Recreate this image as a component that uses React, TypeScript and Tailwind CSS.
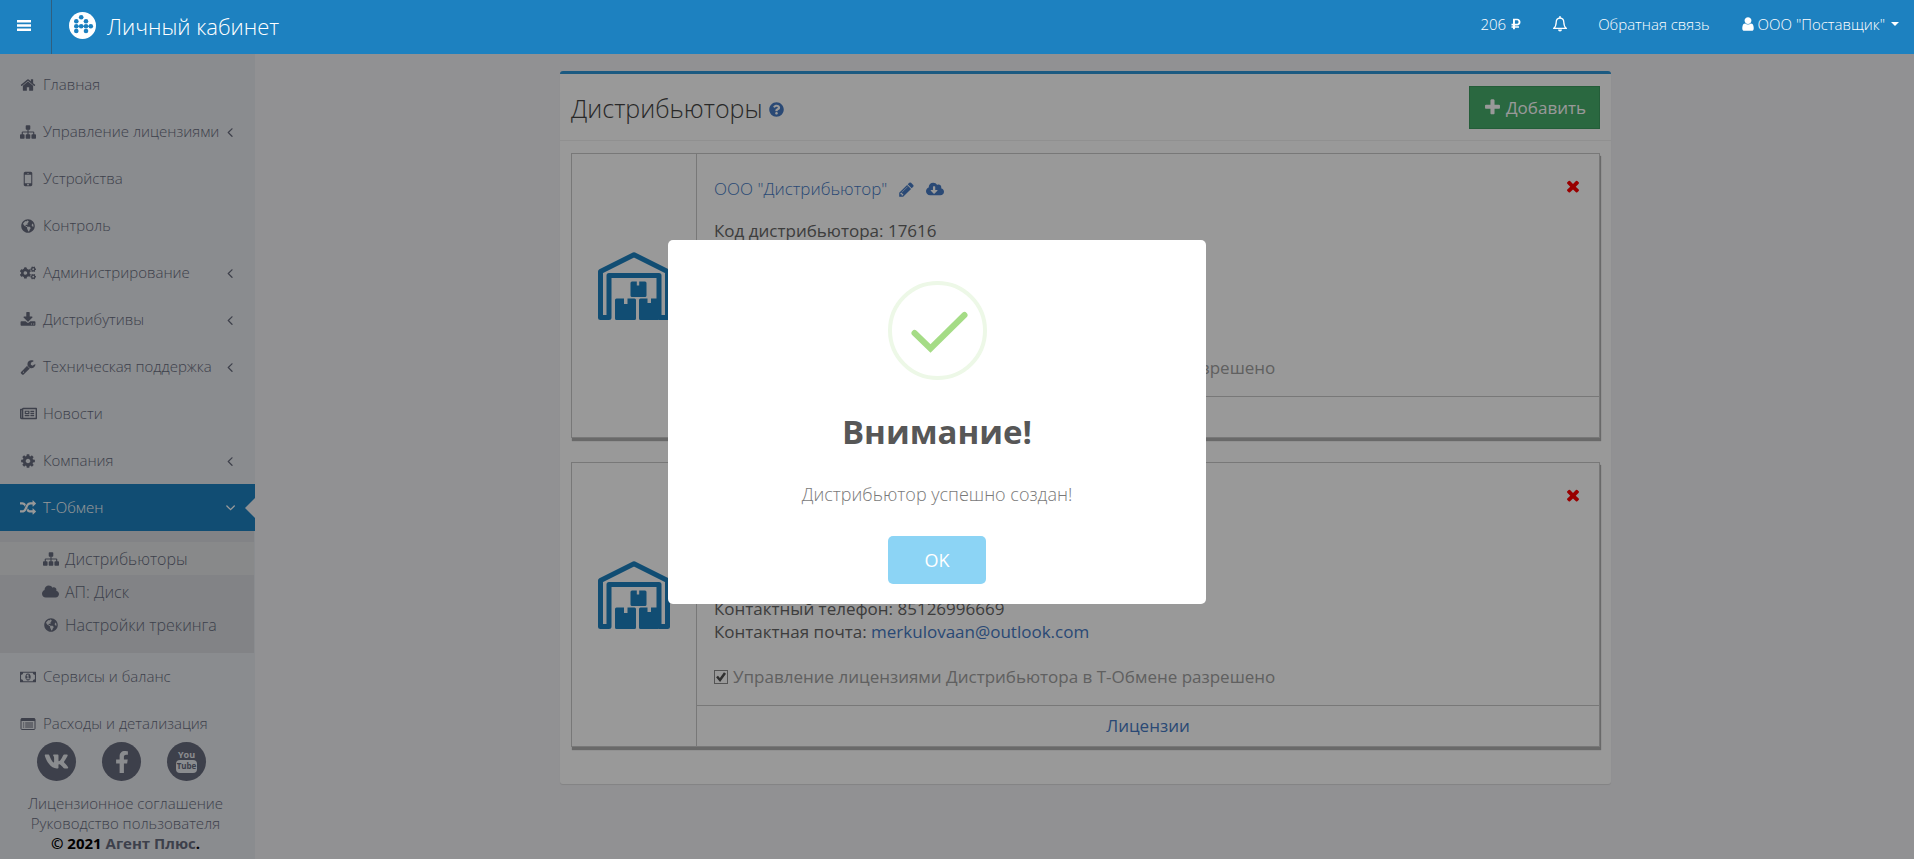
import { useState } from 'react';
import type { ReactNode } from 'react';
import {
  FaCloud,
  FaCloudDownloadAlt,
  FaCogs,
  FaFacebookF,
  FaGlobeAmericas,
  FaQuestionCircle,
  FaRegNewspaper,
  FaRubleSign,
  FaVk,
} from 'react-icons/fa';

const paths = {
  home: 'M1472 992v480q0 26-19 45t-45 19h-384v-384h-256v384h-384q-26 0-45-19t-19-45v-480q0-1 .5-3t.5-3l575-474 575 474q1 2 1 6zm223-69l-62 74q-8 9-21 11h-3q-13 0-21-7l-692-577-692 577q-12 8-24 7-13-2-21-11l-62-74q-8-10-7-23.5t11-21.5l719-599q32-26 76-26t76 26l244 204v-195q0-14 9-23t23-9h192q14 0 23 9t9 23v408l219 182q10 8 11 21.5t-7 23.5z',
  sitemap:
    'M1792 1248v320q0 40-28 68t-68 28h-320q-40 0-68-28t-28-68v-320q0-40 28-68t68-28h96v-192h-512v192h96q40 0 68 28t28 68v320q0 40-28 68t-68 28h-320q-40 0-68-28t-28-68v-320q0-40 28-68t68-28h96v-192h-512v192h96q40 0 68 28t28 68v320q0 40-28 68t-68 28h-320q-40 0-68-28t-28-68v-320q0-40 28-68t68-28h96v-192q0-52 38-90t90-38h512v-192h-96q-40 0-68-28t-28-68v-320q0-40 28-68t68-28h320q40 0 68 28t28 68v320q0 40-28 68t-68 28h-96v192h512q52 0 90 38t38 90v192h96q40 0 68 28t28 68z',
  mobile:
    'M976 1408q0-33-23.5-56.5t-56.5-23.5-56.5 23.5-23.5 56.5 23.5 56.5 56.5 23.5 56.5-23.5 23.5-56.5zm208-160v-704q0-13-9.5-22.5t-22.5-9.5h-512q-13 0-22.5 9.5t-9.5 22.5v704q0 13 9.5 22.5t22.5 9.5h512q13 0 22.5-9.5t9.5-22.5zm-192-848q0-16-16-16h-160q-16 0-16 16t16 16h160q16 0 16-16zm288-16v1024q0 52-38 90t-90 38h-512q-52 0-90-38t-38-90v-1024q0-52 38-90t90-38h512q52 0 90 38t38 90z',
  download:
    'M1344 1344q0-26-19-45t-45-19-45 19-19 45 19 45 45 19 45-19 19-45zm256 0q0-26-19-45t-45-19-45 19-19 45 19 45 45 19 45-19 19-45zm128-224v320q0 40-28 68t-68 28h-1472q-40 0-68-28t-28-68v-320q0-40 28-68t68-28h465l135 136q58 56 136 56t136-56l136-136h464q40 0 68 28t28 68zm-325-569q17 41-14 70l-448 448q-18 19-45 19t-45-19l-448-448q-31-29-14-70 17-39 59-39h256v-448q0-26 19-45t45-19h256q26 0 45 19t19 45v448h256q42 0 59 39z',
  wrench:
    'M448 1472q0-26-19-45t-45-19-45 19-19 45 19 45 45 19 45-19 19-45zm644-420l-682 682q-37 37-90 37-52 0-91-37l-106-108q-38-36-38-90 0-53 38-91l681-681q39 98 114.5 173.5t173.5 114.5zm634-435q0 39-23 106-47 134-164.5 217.5t-258.5 83.5q-185 0-316.5-131.5t-131.5-316.5 131.5-316.5 316.5-131.5q58 0 121.5 16.5t107.5 46.5q16 11 16 28t-16 28l-293 169v224l193 107q5-3 79-48.5t135.5-81 70.5-35.5q15 0 23.5 10t8.5 25z',
  cog: 'M1152 896q0-106-75-181t-181-75-181 75-75 181 75 181 181 75 181-75 75-181zm512-109v222q0 12-8 23t-20 13l-185 28q-19 54-39 91 35 50 107 138 10 12 10 25t-9 23q-27 37-99 108t-94 71q-12 0-26-9l-138-108q-44 23-91 38-16 136-29 186-7 28-36 28h-222q-14 0-24.5-8.5t-11.5-21.5l-28-184q-49-16-90-37l-141 107q-10 9-25 9-14 0-25-11-126-114-165-168-7-10-7-23 0-12 8-23 15-21 51-66.5t54-70.5q-27-50-41-99l-183-27q-13-2-21-12.5t-8-23.5v-222q0-12 8-23t19-13l186-28q14-46 39-92-40-57-107-138-10-12-10-24 0-10 9-23 26-36 98.5-107.5t94.5-71.5q13 0 26 10l138 107q44-23 91-38 16-136 29-186 7-28 36-28h222q14 0 24.5 8.5t11.5 21.5l28 184q49 16 90 37l142-107q9-9 24-9 13 0 25 10 129 119 165 170 7 8 7 22 0 12-8 23-15 21-51 66.5t-54 70.5q26 50 41 98l183 28q13 2 21 12.5t8 23.5z',
  random:
    'M666 481q-60 92-137 273-22-45-37-72.5t-40.5-63.5-51-56.5-63-35-81.5-14.5h-224q-14 0-23-9t-9-23v-192q0-14 9-23t23-9h224q250 0 410 225zm1126 799q0 14-9 23l-320 320q-9 9-23 9-13 0-22.5-9.5t-9.5-22.5v-192q-32 0-85 .5t-81 1-73-1-71-5-64-10.5-63-18.5-58-28.5-59-40-55-53.5-56-69.5q59-93 136-273 22 45 37 72.5t40.5 63.5 51 56.5 63 35 81.5 14.5h256v-192q0-14 9-23t23-9q12 0 24 10l319 319q9 9 9 23zm0-896q0 14-9 23l-320 320q-9 9-23 9-13 0-22.5-9.5t-9.5-22.5v-192h-256q-48 0-87 15t-69 45-51 61.5-45 77.5q-32 62-78 171-29 66-49.5 111t-54 105-64 100-74 83-90 68.5-106.5 42-128 16.5h-224q-14 0-23-9t-9-23v-192q0-14 9-23t23-9h224q48 0 87-15t69-45 51-61.5 45-77.5q32-62 78-171 29-66 49.5-111t54-105 64-100 74-83 90-68.5 106.5-42 128-16.5h256v-192q0-14 9-23t23-9q12 0 24 10l319 319q9 9 9 23z',
  angleLeft:
    'M1203 544q0 13-10 23l-393 393 393 393q10 10 10 23t-10 23l-50 50q-10 10-23 10t-23-10l-466-466q-10-10-10-23t10-23l466-466q10-10 23-10t23 10l50 50q10 10 10 23z',
  user: 'M1536 1399q0 109-62.5 187t-150.5 78h-854q-88 0-150.5-78t-62.5-187q0-85 8.5-160.5t31.5-152 58.5-131 94-89 134.5-34.5q131 128 313 128t313-128q76 0 134.5 34.5t94 89 58.5 131 31.5 152 8.5 160.5zm-256-887q0 159-112.5 271.5t-271.5 112.5-271.5-112.5-112.5-271.5 112.5-271.5 271.5-112.5 271.5 112.5 112.5 271.5z',
  plus: 'M1600 736v192q0 40-28 68t-68 28h-416v416q0 40-28 68t-68 28h-192q-40 0-68-28t-28-68v-416h-416q-40 0-68-28t-28-68v-192q0-40 28-68t68-28h416v-416q0-40 28-68t68-28h192q40 0 68 28t28 68v416h416q40 0 68 28t28 68z',
  close:
    'M1490 1322q0 40-28 68l-136 136q-28 28-68 28t-68-28l-294-294-294 294q-28 28-68 28t-68-28l-136-136q-28-28-28-68t28-68l294-294-294-294q-28-28-28-68t28-68l136-136q28-28 68-28t68 28l294 294 294-294q28-28 68-28t68 28l136 136q28 28 28 68t-28 68l-294 294 294 294q28 28 28 68z',
  pencil:
    'M491 1536l91-91-235-235-91 91v107h128v128h107zm523-928q0-22-22-22-10 0-17 7l-542 542q-7 7-7 17 0 22 22 22 10 0 17-7l542-542q7-7 7-17zm-54-192l416 416-832 832h-416v-416zm683 96q0 53-37 90l-166 166-416-416 166-165q36-38 90-38 53 0 91 38l235 234q37 39 37 91z',
};

function Icon({ name, className = 'size-4' }: { name: keyof typeof paths; className?: string }) {
  return (
    <svg viewBox="0 0 1792 1792" fill="currentColor" className={`shrink-0 ${className}`} aria-hidden="true">
      <path d={paths[name]} />
    </svg>
  );
}

function MoneyIcon() {
  return (
    <svg viewBox="-64 0 1920 1792" fill="currentColor" className="size-4" aria-hidden="true">
      <path d="M704 1152h384v-96h-128v-448h-114l-148 137 77 80q42-37 55-57h2v288h-128v96zm512-256q0 70-21 142t-59.5 134-101.5 101-138 39-138-39-101.5-101-59.5-134-21-142 21-142 59.5-134 101.5-101 138-39 138 39 101.5 101 59.5 134 21 142zm512 256v-512q-106 0-181-75t-75-181h-1152q0 106-75 181t-181 75v512q106 0 181 75t75 181h1152q0-106 75-181t181-75zm128-832v1152q0 26-19 45t-45 19h-1792q-26 0-45-19t-19-45v-1152q0-26 19-45t45-19h1792q26 0 45 19t19 45z" />
    </svg>
  );
}

function ListIcon() {
  return (
    <svg viewBox="0 0 16 16" className="size-4" aria-hidden="true">
      <rect x="1" y="2.5" width="14" height="11" rx="1" fill="none" stroke="currentColor" />
      <path d="M1 2.5h14v2.5H1z" fill="currentColor" />
      <path d="M3 7h1.2M3 9h1.2M3 11h1.2M5.2 7H13M5.2 9H13M5.2 11H13" stroke="currentColor" />
    </svg>
  );
}

function BellIcon() {
  return (
    <svg viewBox="0 0 16 16" className="size-4" aria-hidden="true">
      <path
        d="M8 2C5.4 2 4.2 4 4.2 6.2c0 3-.9 4.800-2.600 6.200h12.800c-1.700-1.400-2.600-3.200-2.600-6.200C11.800 4 10.600 2 8 2z"
        fill="none"
        stroke="currentColor"
        strokeWidth="1.3"
        strokeLinejoin="round"
      />
      <path d="M8 .6v1.400" stroke="currentColor" strokeWidth="1.400" strokeLinecap="round" />
      <path d="M6 13.400a2 2 0 0 0 4 0z" fill="currentColor" />
    </svg>
  );
}

function Logo() {
  const dots = [
    [12.2, 5.3], [7.3, 9.3], [17, 9.3], [7.3, 14.2], [12.2, 14.2],
    [17, 14.2], [21.8, 14.2], [7.3, 19], [17, 19],
  ];
  return (
    <svg viewBox="0 0 27 27" className="size-[27px]" aria-hidden="true">
      <circle cx="13.5" cy="13.5" r="13.5" fill="#fff" />
      <path d="M7.300 14.200H21.800" stroke="#1d81c0" strokeWidth="1" />
      {dots.map(([x, y]) => (
        <circle key={`${x}-${y}`} cx={x} cy={y} r="2.300" fill="#1d81c0" />
      ))}
    </svg>
  );
}

function Warehouse() {
  return (
    <svg viewBox="0 0 72 68" className="h-[68px] w-[72px]" aria-hidden="true">
      <path
        d="M2.500 65.500V19.500L36 2.700l33.500 16.800v46h-8.500V23.500H11v42z"
        fill="none"
        stroke="#1d81c0"
        strokeWidth="5"
        strokeLinejoin="round"
      />
      <g fill="#1d81c0">
        <path d="M34 29.500h4.800v4h2.400v-4H47a1.500 1.500 0 0 1 1.500 1.500v12.500a1.500 1.500 0 0 1-1.500 1.500H34a1.500 1.500 0 0 1-1.500-1.500V31a1.500 1.500 0 0 1 1.500-1.500z" />
        <path d="M18.500 46.500H26v5.500h3.500v-5.500h7A1.500 1.500 0 0 1 38 48v18.500a1.500 1.500 0 0 1-1.500 1.500h-18a1.500 1.500 0 0 1-1.500-1.500V48a1.500 1.500 0 0 1 1.500-1.500z" />
        <path d="M42.500 46.500h7v4.500H53v-4.500h7V68H42.500a1.500 1.500 0 0 1-1.500-1.500V48a1.500 1.500 0 0 1 1.500-1.500z" />
      </g>
    </svg>
  );
}

type MenuItem = {
  title: string;
  icon: ReactNode;
  nested?: boolean;
  active?: boolean;
};

const menu: MenuItem[] = [
  { title: 'Главная', icon: <Icon name="home" /> },
  { title: 'Управление лицензиями', icon: <Icon name="sitemap" />, nested: true },
  { title: 'Устройства', icon: <Icon name="mobile" className="size-5" /> },
  { title: 'Контроль', icon: <FaGlobeAmericas className="size-[14px]" /> },
  { title: 'Администрирование', icon: <FaCogs className="size-4" />, nested: true },
  { title: 'Дистрибутивы', icon: <Icon name="download" />, nested: true },
  { title: 'Техническая поддержка', icon: <Icon name="wrench" />, nested: true },
  { title: 'Новости', icon: <FaRegNewspaper className="size-[17px] shrink-0" /> },
  { title: 'Компания', icon: <Icon name="cog" />, nested: true },
  { title: 'Т-Обмен', icon: <Icon name="random" />, nested: true, active: true },
];

const submenu: MenuItem[] = [
  { title: 'Дистрибьюторы', icon: <Icon name="sitemap" />, active: true },
  { title: 'АП: Диск', icon: <FaCloud className="size-[17px]" /> },
  { title: 'Настройки трекинга', icon: <FaGlobeAmericas className="size-[14px]" /> },
];

const billing: MenuItem[] = [
  { title: 'Сервисы и баланс', icon: <MoneyIcon /> },
  { title: 'Расходы и детализация', icon: <ListIcon /> },
];

const distributors = [
  { id: 1, name: 'ООО "Дистрибьютор"', code: '17616', phone: '85126996669', email: 'merkulovaan@outlook.com' },
  { id: 2, name: 'ООО', code: '17617', phone: '85126996669', email: 'merkulovaan@outlook.com' },
];

function SidebarLink({ item }: { item: MenuItem }) {
  return (
    <li>
      <a
        href="#"
        className={`relative flex h-[47px] items-center gap-[7px] pl-5 pr-[17px] ${
          item.active ? 'bg-[#1d81c0] text-white' : ''
        }`}
      >
        <span className="flex w-4 shrink-0 justify-center">{item.icon}</span>
        <span className="min-w-0 flex-1 whitespace-nowrap">{item.title}</span>
        {item.nested && <Icon name="angleLeft" className={item.active ? 'size-4 -rotate-90' : 'size-4'} />}
        {item.active && (
          <span className="absolute right-0 top-1/2 -translate-y-1/2 border-y-10 border-r-10 border-y-transparent border-r-[#f2f2f5]" />
        )}
      </a>
    </li>
  );
}

function Sidebar() {
  return (
    <aside className="flex w-[255px] shrink-0 flex-col justify-between bg-[#e7e9ee] text-[15px] font-light text-[#666b7d]">
      <nav className="pt-[7px]">
        <ul>
          {menu.map((item) => (
            <SidebarLink key={item.title} item={item} />
          ))}
          <li>
            <ul className="mr-px bg-[#d9dbdf] pt-[11px] pb-3 text-base">
              {submenu.map((item) => (
                <li key={item.title}>
                  <a
                    href="#"
                    className={`flex h-[33px] items-center gap-1.5 pl-[42px] ${item.active ? 'bg-[#e3e5e7]' : ''}`}
                  >
                    <span className="flex w-[17px] justify-center">{item.icon}</span>
                    {item.title}
                  </a>
                </li>
              ))}
            </ul>
          </li>
          {billing.map((item) => (
            <SidebarLink key={item.title} item={item} />
          ))}
        </ul>
      </nav>

      <div className="-mt-4 pb-1.5 text-center leading-5">
        <div className="mb-3 flex justify-center gap-[26px] pr-3">
          <a href="#" aria-label="VK" className="flex size-[39px] items-center justify-center rounded-full bg-[#666b7d] text-[#e7e9ee]">
            <FaVk className="size-[25px]" />
          </a>
          <a href="#" aria-label="Facebook" className="flex size-[39px] items-center justify-center rounded-full bg-[#666b7d] text-[#e7e9ee]">
            <FaFacebookF className="size-[22px]" />
          </a>
          <a
            href="#"
            className="flex size-[39px] flex-col items-center justify-center rounded-full bg-[#666b7d] text-[9px] font-bold leading-[10px] text-[#e7e9ee]"
          >
            <span>You</span>
            <span className="rounded-sm bg-[#e7e9ee] px-px pt-px pb-0.5 text-[8px] text-[#666b7d]">Tube</span>
          </a>
        </div>
        <div className="pr-1">
          <a href="#" className="block">Лицензионное соглашение</a>
          <a href="#" className="block">Руководство пользователя</a>
          <p className="font-bold text-black">
            © 2021 <a href="#" className="text-[#666b7d]">Агент Плюс</a>.
          </p>
        </div>
      </div>
    </aside>
  );
}

function DistributorCard({ item }: { item: (typeof distributors)[number] }) {
  return (
    <article className="flex h-[285px] border border-[#c8c8c8] bg-white text-[17px] shadow-[1px_3px_1px_#b0b0b0]">
      <div className="flex w-[125px] shrink-0 justify-center border-r border-[#c8c8c8] pt-[98px]">
        <Warehouse />
      </div>
      <div className="flex min-w-0 flex-1 flex-col">
        <div className="flex flex-1 flex-col pl-[17px] pr-[17px] pt-[23px]">
          <div className="flex items-start justify-between">
            <div className="flex items-center text-[#467ac4]">
              <a href="#" className="leading-6 font-light">{item.name}</a>
              <button type="button" aria-label="Изменить" className="ml-[11px]">
                <Icon name="pencil" className="size-[17px]" />
              </button>
              <button type="button" aria-label="Скачать" className="ml-[11px]">
                <FaCloudDownloadAlt className="size-[18px]" />
              </button>
            </div>
            <button type="button" aria-label="Удалить" className="text-[#ff0000]">
              <Icon name="close" className="size-[18px]" />
            </button>
          </div>
          <div className="mt-[18px] flex flex-1 flex-col leading-[23px]">
            <p>Код дистрибьютора: {item.code}</p>
            <p className="mt-auto">Контактный телефон: {item.phone}</p>
            <p>
              Контактная почта: <a href="#" className="text-[#467ac4]">{item.email}</a>
            </p>
            <label className="mt-[22px] mb-[17px] flex items-center gap-[5px] text-[#a0a0a0]">
              <input
                type="checkbox"
                defaultChecked
                className="peer size-[14px] appearance-none border border-[#8c8c8c] bg-white"
              />
              <svg
                viewBox="0 0 14 14"
                className="-ml-[19px] hidden size-[14px] text-[#505050] peer-checked:block"
                aria-hidden="true"
              >
                <path d="M3 6.500l3 3.500 5-7" fill="none" stroke="currentColor" strokeWidth="2.500" />
              </svg>
              Управление лицензиями Дистрибьютора в Т-Обмене разрешено
            </label>
          </div>
        </div>
        <a
          href="#"
          className="flex h-[41px] items-center justify-center border-t border-[#c8c8c8] text-[#467ac4]"
        >
          Лицензии
        </a>
      </div>
    </article>
  );
}

export default function App() {
  const [alertOpen, setAlertOpen] = useState(true);

  return (
    <div className="flex min-h-screen flex-col bg-[#f2f2f5] font-['Open_Sans',sans-serif] text-base text-[#666]">
      {/* Top bar */}
      <header className="relative z-50 flex h-[54px] items-center bg-[#1d81c0] text-white">
        <button
          type="button"
          aria-label="Меню"
          className="flex h-full w-[52px] items-center border-r border-[#2f5f80] pb-1 pl-[17px]"
        >
          <svg viewBox="0 0 14 11" className="h-[11px] w-[14px]" aria-hidden="true">
            <path d="M0 1.250h14M0 5.500h14M0 9.750h14" stroke="currentColor" strokeWidth="2.500" />
          </svg>
        </button>
        <a href="#" className="flex items-center gap-[11px] pb-[3px] pl-[17px]">
          <Logo />
          <span className="text-[22px] leading-7 font-light">Личный кабинет</span>
        </a>
        <nav className="ml-auto flex items-center pb-1.5 pr-[15px] text-[15px]">
          <a href="#" className="flex items-center gap-1 font-light">
            206 <FaRubleSign className="size-3" />
          </a>
          <a href="#" aria-label="Уведомления" className="ml-[30px]">
            <BellIcon />
          </a>
          <a href="#" className="ml-[30px] font-light">Обратная связь</a>
          <button type="button" className="ml-[30px] flex items-center gap-0.5 font-light">
            <Icon name="user" className="size-4" />
            ООО "Поставщик"
            <span className="ml-1 border-x-4 border-t-4 border-x-transparent border-t-white" />
          </button>
        </nav>
      </header>

      <div className="flex flex-1">
        <Sidebar />
        <main className="min-w-0 flex-1 pl-0.5 pt-[17px]">
          <section className="mx-auto max-w-[1051px] rounded-[3px] border-t-3 border-[#2d96d8] bg-white pb-[37px] shadow-[0_1px_1px_rgba(0,0,0,0.1)]">
            <div className="flex items-center justify-between border-b border-[#f0f0f0] px-[11px] pt-3 pb-[11px]">
              <h1 className="flex items-center gap-1.5 text-[25px] leading-8 font-light text-[#444]">
                Дистрибьюторы
                <FaQuestionCircle className="mt-1 size-[15px] text-[#467ac4]" />
              </h1>
              <button
                type="button"
                className="flex h-[43px] items-center gap-1 border border-[#3c9c60] bg-[#46ad6c] px-[13px] text-[17px] text-white"
              >
                <Icon name="plus" className="size-[19px]" />
                Добавить
              </button>
            </div>
            <div className="space-y-6 px-[11px] pt-3">
              {distributors.map((item) => (
                <DistributorCard key={item.id} item={item} />
              ))}
            </div>
          </section>
        </main>
      </div>

      {/* Alert */}
      {alertOpen && (
        <div className="fixed inset-0 z-40 flex items-center justify-center bg-black/40 pb-4 pr-10">
          <div role="alertdialog" aria-label="Внимание!" className="flex w-[538px] flex-col items-center rounded-[5px] bg-white pt-[41px] pb-5">
            <svg viewBox="0 0 99 99" className="size-[99px]" aria-hidden="true">
              <circle cx="49.500" cy="49.500" r="47.500" fill="none" stroke="#edf8e7" strokeWidth="4" />
              <path
                d="M26.500 52l16 15.500L76.500 34"
                fill="none"
                stroke="#a5dc86"
                strokeWidth="6"
                strokeLinecap="round"
              />
            </svg>
            <h2 className="mt-8 text-[33px] leading-10 font-bold text-[#575757]">Внимание!</h2>
            <p className="mt-[30px] text-lg leading-6 font-light text-[#797979]">Дистрибьютор успешно создан!</p>
            <button
              type="button"
              onClick={() => setAlertOpen(false)}
              className="mt-[30px] h-12 w-[98px] rounded-[5px] bg-[#8cd4f5] text-lg text-white"
            >
              OK
            </button>
          </div>
        </div>
      )}
    </div>
  );
}
